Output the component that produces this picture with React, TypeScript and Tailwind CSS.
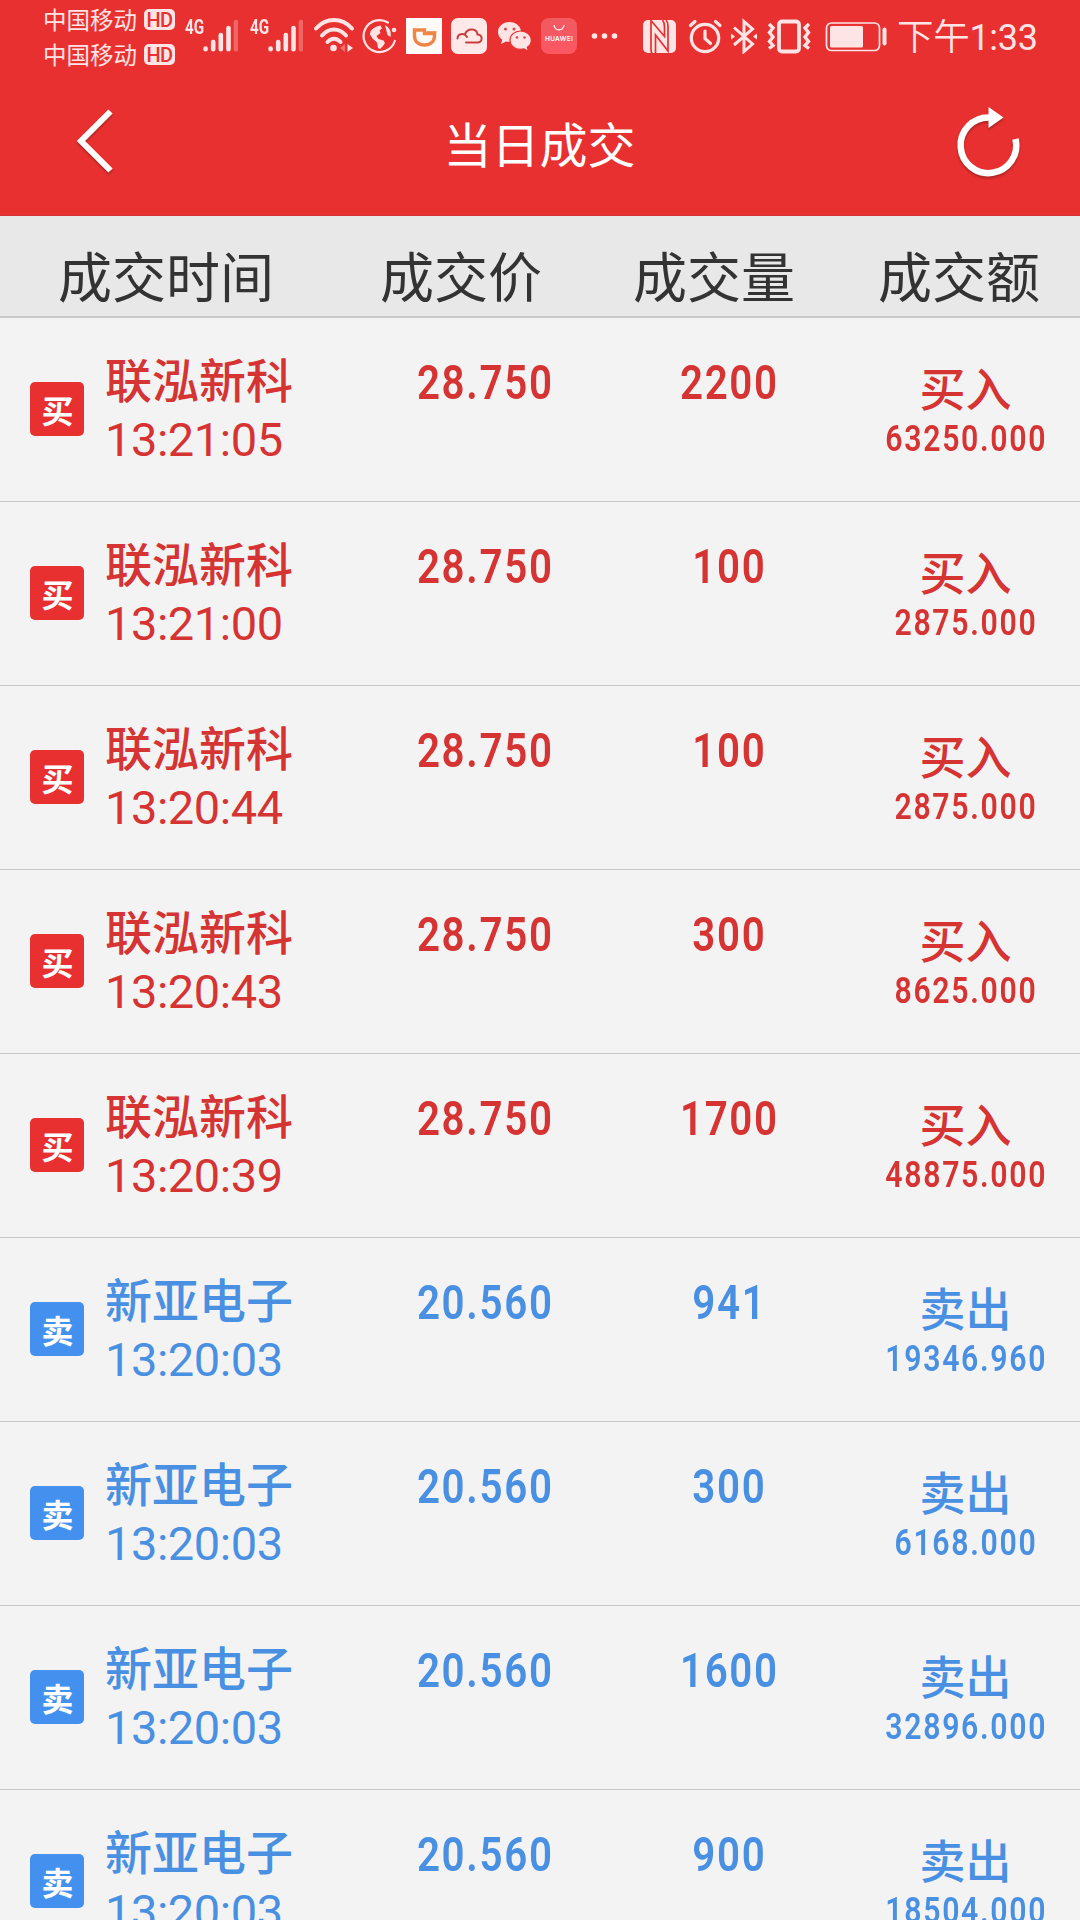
import React from 'react';

type Side = 'buy' | 'sell';

interface Deal {
  name: string;
  time: string;
  price: string;
  volume: string;
  amount: string;
  side: Side;
}

const DEALS: Deal[] = [
  { name: '联泓新科', time: '13:21:05', price: '28.750', volume: '2200', amount: '63250.000', side: 'buy' },
  { name: '联泓新科', time: '13:21:00', price: '28.750', volume: '100', amount: '2875.000', side: 'buy' },
  { name: '联泓新科', time: '13:20:44', price: '28.750', volume: '100', amount: '2875.000', side: 'buy' },
  { name: '联泓新科', time: '13:20:43', price: '28.750', volume: '300', amount: '8625.000', side: 'buy' },
  { name: '联泓新科', time: '13:20:39', price: '28.750', volume: '1700', amount: '48875.000', side: 'buy' },
  { name: '新亚电子', time: '13:20:03', price: '20.560', volume: '941', amount: '19346.960', side: 'sell' },
  { name: '新亚电子', time: '13:20:03', price: '20.560', volume: '300', amount: '6168.000', side: 'sell' },
  { name: '新亚电子', time: '13:20:03', price: '20.560', volume: '1600', amount: '32896.000', side: 'sell' },
  { name: '新亚电子', time: '13:20:03', price: '20.560', volume: '900', amount: '18504.000', side: 'sell' },
];

const Carrier: React.FC = () => (
  <div className="flex h-[35px] items-center">
    <span className="text-[23.5px] leading-[35px]">中国移动</span>
    <span className="ml-[7px] flex h-[21px] w-[31px] items-center justify-center rounded-[5px] bg-[#fee4e4] font-['Roboto'] text-[20px] font-medium leading-none tracking-[-0.5px] text-[#e83030]">
      HD
    </span>
  </div>
);

const Signal: React.FC = () => (
  <div className="flex h-[34px] w-[53px] items-start">
    <span className="w-[18px] origin-left scale-x-[0.76] font-['Roboto'] text-[20px] font-bold leading-[18px]">4G</span>
    <svg className="h-[34px] w-[35px] shrink-0" viewBox="0 0 35 34" fill="none" stroke="currentColor" strokeWidth="4.6" strokeLinecap="round">
      <path d="M2.6 30.6v.6M10.2 24v7.2M17.8 17v14.2M25.5 10v21.2" />
      <path d="M33 4v27.2" opacity=".3" />
    </svg>
  </div>
);

const StatusBar: React.FC = () => (
  <div className="flex h-[72px] pl-[43px] text-[#fee4e4]">
    <div className="flex w-[142px] flex-col pt-[2px]">
      <Carrier />
      <Carrier />
    </div>
    <div className="flex pt-[18px]">
      <div className="flex w-[128px] gap-[12px]">
        <Signal />
        <Signal />
      </div>
      {/* wifi */}
      <svg className="h-[36px] w-[42px]" viewBox="0 0 42 36" fill="none" stroke="currentColor" strokeWidth="4" strokeLinecap="round">
        <path d="M3 10.500C13-.8 29-.8 39 10.500M9 17.500c7-8 17-8 24 0M14.500 24c4-4.500 9-4.500 13 0" />
        <circle cx="20.500" cy="30" r="3.300" fill="currentColor" stroke="none" />
        <path d="m27 30 5-4v8z" fill="currentColor" stroke="none" opacity=".35" />
        <path d="m34.500 26 5.500 4-5.500 4z" fill="currentColor" stroke="none" />
      </svg>
      {/* globe */}
      <svg className="ml-[7px] h-[36px] w-[36px]" viewBox="0 0 36 36" fill="none" stroke="currentColor" strokeWidth="2.2">
        <path d="M26 4.500A16 16 0 1 0 32.800 23" strokeLinecap="round" />
        <circle cx="32" cy="12" r="2.300" fill="currentColor" stroke="none" />
        <path d="M8.500 13.500C10 11 13 8.500 18.500 7.500l1.500 3-2.500 2 1 2.500-4 3 2 3 5 1.500 1.500 2.500-2 3-3 3-2-1-1-5.500-4.500-4-2.500-4zM23 7c5 3 6.500 7 5.500 12l-3-2z" fill="currentColor" stroke="none" />
      </svg>
      {/* ride hailing */}
      <svg className="ml-[8px] h-[36px] w-[36px]" viewBox="0 0 36 36" fill="none">
        <path fill="#fefaf8" d="M0 0h36v36H0z" />
        <path d="M18.500 12H8.500v6c0 5.500 4 9 10 9s10-3.500 10-9v-2.500h-10z" stroke="#ee8648" strokeWidth="3.400" />
        <path d="M20.500 13.800h10" stroke="#ee8648" strokeWidth="1.200" />
      </svg>
      {/* cloud */}
      <svg className="ml-[9px] h-[36px] w-[36px]" viewBox="0 0 36 36" fill="none">
        <rect width="36" height="36" rx="7" fill="#fee8e8" />
        <path d="M6.500 20.500c0-5 6.500-6 9.500-1.500M14 16c3-6.500 12-5.500 12.500.5 5.500 0 5.500 8 0 8H15" stroke="#c83e40" strokeWidth="2" strokeLinecap="round" />
      </svg>
      {/* wechat */}
      <svg className="ml-[10px] h-[36px] w-[36px]" viewBox="0 0 36 36">
        <path fill="currentColor" d="M12.500 4C5.800 4 1 8.500 1 14c0 3.200 1.600 6 4.200 7.800L4 26l5-2.600c1.200.3 2.400.5 3.500.5C19.200 24 24 19.500 24 14S19.200 4 12.500 4z" />
        <path fill="currentColor" stroke="#e83030" strokeWidth="1.200" d="M23.500 13C17.500 13 13 17 13 22.200s4.500 9.200 10.500 9.200c1.200 0 2.400-.2 3.500-.5l4.500 2.400-1.200-4c2.500-1.700 4-4.200 4-7.100C34.300 17 29.500 13 23.500 13z" />
        <g fill="#d64a4a">
          <circle cx="8.500" cy="11" r="1.500" />
          <circle cx="17" cy="11" r="1.500" />
          <circle cx="20" cy="19.500" r="1.300" />
          <circle cx="27.500" cy="19.500" r="1.300" />
        </g>
      </svg>
      {/* huawei app market */}
      <div className="ml-[8px] flex h-[36px] w-[36px] flex-col items-center rounded-[8px] bg-linear-to-b from-[#f15a61] to-[#fb5763] pt-[6px] text-white">
        <svg className="h-[7px] w-[12px]" viewBox="0 0 12 7" fill="none" stroke="currentColor" strokeWidth="1.200">
          <path d="M1 1c1 6.500 9 6.500 10 0" />
        </svg>
        <span className="mt-[4px] font-['Inter'] text-[6.500px] font-semibold leading-[8px] tracking-[0.300px]">HUAWEI</span>
      </div>
      <svg className="ml-[14px] h-[36px] w-[27px]" viewBox="0 0 27 36" fill="currentColor">
        <circle cx="3.500" cy="18" r="2.800" />
        <circle cx="13.500" cy="18" r="2.800" />
        <circle cx="23.500" cy="18" r="2.800" />
      </svg>
      {/* nfc */}
      <svg className="ml-[24px] h-[36px] w-[35px]" viewBox="0 0 35 36">
        <rect x="1" y="2" width="33" height="33" rx="5" fill="currentColor" />
        <path d="M10 35.500C8.500 33.500 9 31 9 28V2.500l13.500 16V8.500c0-2.500-.5-4.500-2-6.500M13.500 35V17L26 33V8c0-3-.5-4.500-2-6" fill="none" stroke="#e83030" strokeWidth="1.700" />
      </svg>
      {/* alarm */}
      <svg className="ml-[11px] h-[36px] w-[36px]" viewBox="0 0 36 36" fill="none" stroke="currentColor" strokeWidth="3.200" strokeLinecap="round">
        <circle cx="17" cy="20" r="13.700" />
        <path d="M17 13v7.500l5.500 5M2.500 7.500l4.500-4M32 7.500l-4.500-4" />
      </svg>
      {/* bluetooth */}
      <svg className="ml-[6px] h-[36px] w-[28px]" viewBox="0 0 28 36" fill="none" stroke="currentColor" strokeWidth="3">
        <path d="M4 9.500 22.500 26 14 33.500V3.500l8.500 7.500L4 27" />
        <path d="m1 15.500 4 3-4 3zM27 15.500l-4 3 4 3z" fill="currentColor" stroke="none" />
      </svg>
      {/* vibrate */}
      <svg className="ml-[9px] h-[36px] w-[44px]" viewBox="0 0 44 36" fill="none" stroke="currentColor" strokeWidth="3.400">
        <rect x="12" y="3.500" width="20" height="30" rx="3" strokeWidth="3.800" />
        <path d="m2 6 4 4-3.500 4.500L6 19l-3.500 4.500L6 27.500l-4 3M42 6l-4 4 3.500 4.500L38 19l3.500 4.500-3.500 4 4 3" />
      </svg>
      {/* battery */}
      <svg className="ml-[14px] h-[36px] w-[63px]" viewBox="0 0 63 36" fill="none">
        <rect x="1.500" y="5" width="53" height="27.500" rx="5" stroke="currentColor" strokeWidth="1.700" />
        <rect x="5" y="8" width="33" height="21.500" rx="1.500" fill="currentColor" />
        <rect x="57.500" y="9.500" width="4" height="18" rx="2" fill="currentColor" />
      </svg>
    </div>
    <span className="ml-[9px] whitespace-nowrap pt-[15px] font-['Roboto','Noto_Sans_CJK_SC',sans-serif] text-[36px] leading-[40px] tracking-[-0.300px]">
      <span className="font-['Noto_Sans_CJK_SC'] text-[36.500px] font-[350]">下午</span>
      1:33
    </span>
  </div>
);

const NavBar: React.FC = () => (
  <div className="flex h-[144px] items-start justify-between border-b border-[#d03434] pl-[74px] pr-[58px] text-white">
    <button className="mt-[36px]">
      <svg className="h-[68px] w-[44px] drop-shadow-[0_2px_1px_rgba(0,0,0,0.25)]" viewBox="0 0 44 68" fill="none" stroke="currentColor" strokeWidth="6">
        <path d="M36.500 3.500 7 33l29.500 29.500" />
      </svg>
    </button>
    <h1 className="ml-[5px] pt-[35px] text-[48px] leading-[70px]">当日成交</h1>
    <button className="mt-[34px]">
      <svg className="h-[72px] w-[66px] drop-shadow-[0_2px_1px_rgba(0,0,0,0.25)]" viewBox="0 0 66 72" fill="none">
        <path d="M59.500 33A27.800 27.800 0 1 1 33 11.500" stroke="currentColor" strokeWidth="6.500" />
        <path d="M32.500 1 47.500 11.500 32.500 22z" fill="currentColor" />
      </svg>
    </button>
  </div>
);

const TableHead: React.FC = () => (
  <div className="grid h-[102px] grid-cols-[332px_258px_248px_242px] border-b-2 border-[#c8c8c8] bg-[#e8e8e8] pt-[19px] text-center text-[54px] leading-[80px] text-[#333333]">
    <span>成交时间</span>
    <span>成交价</span>
    <span>成交量</span>
    <span>成交额</span>
  </div>
);

const DealRow: React.FC<{ deal: Deal }> = ({ deal }) => {
  const buy = deal.side === 'buy';
  return (
    <li className={`grid h-[184px] grid-cols-[362px_244px_245px_229px] border-b border-[#c8c8c8] ${buy ? 'text-[#d63333]' : 'text-[#4a90e2]'}`}>
      <div className="flex">
        <div className={`ml-[30px] mt-[64px] flex h-[54px] w-[54px] items-center justify-center rounded-[5px] pl-[1px] text-[32px] font-bold leading-none text-white ${buy ? 'bg-[#e83030]' : 'bg-[#4490ee]'}`}>
          {buy ? '买' : '卖'}
        </div>
        <div className="ml-[21px] flex flex-col pt-[30px]">
          <span className="text-[47px] font-medium leading-[60px]">{deal.name}</span>
          <span className="mt-[2px] font-['Roboto'] text-[47px] leading-[60px] tracking-[-0.450px]">{deal.time}</span>
        </div>
      </div>
      <div className="scale-x-[0.84] pl-[3px] pt-[35px] text-center font-['Roboto'] text-[48px] font-semibold leading-[60px] tracking-[2px]">
        {deal.price}
      </div>
      <div className="scale-x-[0.84] pl-[2px] pt-[35px] text-center font-['Roboto'] text-[48px] font-semibold leading-[60px] tracking-[2px]">
        {deal.volume}
      </div>
      <div className="flex flex-col items-center pt-[39px]">
        <span className="text-[46px] font-medium leading-[58px]">{buy ? '买入' : '卖出'}</span>
        <span className="mt-[4px] scale-x-[0.84] pl-[2px] font-['Roboto'] text-[36px] font-semibold leading-[40px] tracking-[2px]">{deal.amount}</span>
      </div>
    </li>
  );
};

const App: React.FC = () => (
  <div className="h-[1920px] w-[1080px] overflow-hidden bg-[#f3f3f3] font-['Noto_Sans_CJK_SC',sans-serif]">
    <header className="bg-[#e83030]">
      <StatusBar />
      <NavBar />
    </header>
    <TableHead />
    <ul>
      {DEALS.map((deal, i) => (
        <DealRow key={i} deal={deal} />
      ))}
    </ul>
  </div>
);

export default App;
